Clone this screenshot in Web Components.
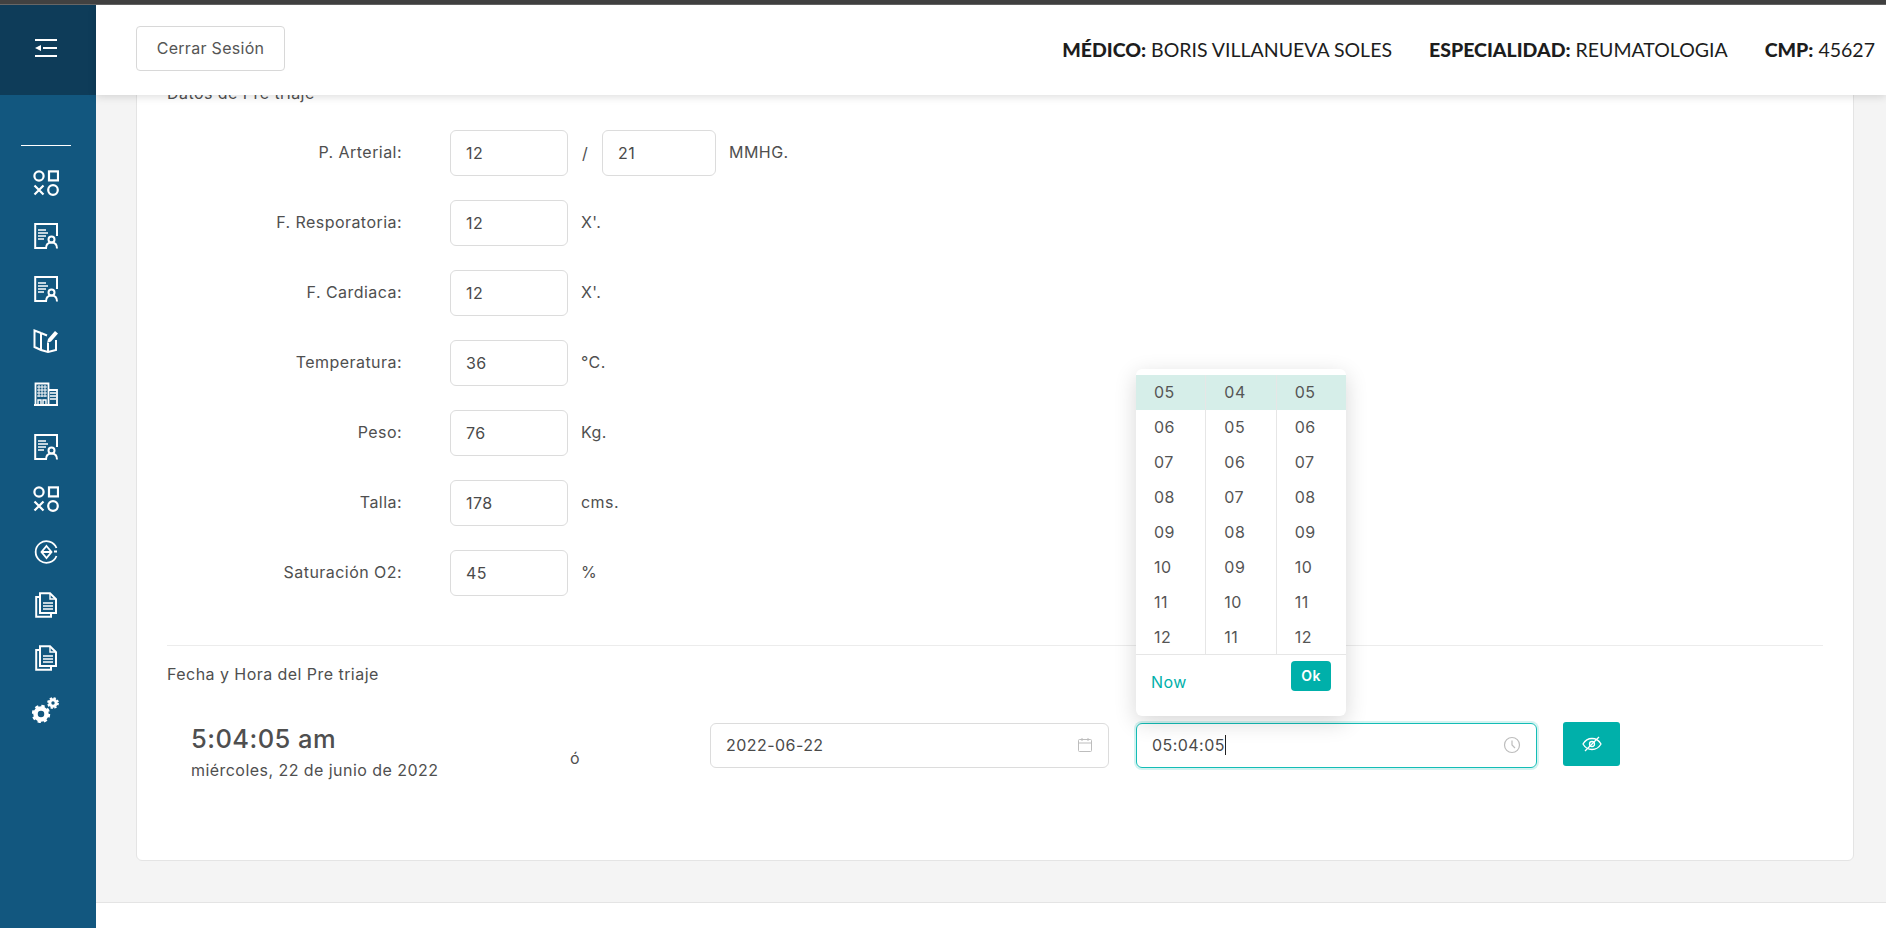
<!DOCTYPE html>
<html lang="es">
<head>
<meta charset="utf-8">
<title>Pre triaje</title>
<style>
  html, body { margin: 0; height: 100%; overflow: hidden; background: #f4f4f4; }
  body { font-family: "Inter", "Noto Sans", sans-serif; color: #4f4f4f; }
</style>
</head>
<body>
<app-shell>
  <side-nav slot="nav"></side-nav>
  <top-bar slot="top"></top-bar>
  <triage-card>
    <vital-row label="P. Arterial:" value="12" value2="21" unit="MMHG."></vital-row>
    <vital-row label="F. Resporatoria:" value="12" unit="X'."></vital-row>
    <vital-row label="F. Cardiaca:" value="12" unit="X'."></vital-row>
    <vital-row label="Temperatura:" value="36" unit="°C."></vital-row>
    <vital-row label="Peso:" value="76" unit="Kg."></vital-row>
    <vital-row label="Talla:" value="178" unit="cms."></vital-row>
    <vital-row label="Saturación O2:" value="45" unit="%"></vital-row>
    <date-time-row slot="footer"></date-time-row>
  </triage-card>
</app-shell>

<script>
// Icones de la barra lateral
const ICONS = {
  menu: `<svg width="24" height="20" viewBox="0 0 24 20" fill="none" stroke="#fff" stroke-width="2"><path d="M1 2h22M9 10h14M1 18h22"/><path d="M1 10l6-3v6z" fill="#fff" stroke="none"/></svg>`,
  apps: `<svg width="26" height="26" viewBox="0 0 26 26" fill="none" stroke="#fff" stroke-width="2.200"><circle cx="6" cy="6" r="4.600"/><rect x="16" y="1.400" width="9" height="9"/><path d="M1.500 15.500l9 9M10.500 15.500l-9 9"/><circle cx="20" cy="20" r="4.800"/></svg>`,
  doc: `<svg width="24" height="26" viewBox="0 0 24 26" fill="none" stroke="#fff" stroke-width="2"><path d="M13 25H1.200V1H23v12"/><path d="M4 7h8M4 10h10M4 13h8M4 16h6" stroke-width="1.500"/><circle cx="17.500" cy="16.500" r="3"/><path d="M12 25.500c0-4 2.500-6 5.500-6s5.500 2 5.500 6"/></svg>`,
  map: `<svg width="26" height="24" viewBox="0 0 26 24" fill="none" stroke="#fff" stroke-width="2"><path d="M8 4L1.500 1.500V18L8 21l7 2 8-2V11"/><path d="M8 4l6 2.500M8 4v17M15 14v9"/><path d="M14 14l1-4 7-8 3 2.500-7 8z" fill="#fff" stroke="none"/></svg>`,
  building: `<svg width="24" height="24" viewBox="0 0 24 24" fill="none" stroke="#fff"><path d="M1.500 23V1.500h13V23M14.500 8H23v15M0 23h24" stroke-width="1.800"/><path d="M3 5h10M3 8h10M3 11h10M3 14h10M5 3v12M8 3v12M11 3v12" stroke-width="1"/><path d="M16 11h6M16 14h6M16 17h6" stroke-width="1.500"/><path d="M4 23v-5h3v5M9 23v-5h3v5" stroke-width="1.400"/></svg>`,
  coin: `<svg width="24" height="24" viewBox="0 0 24 24" fill="none" stroke="#fff" stroke-width="1.800"><path d="M22.500 8A10.800 10.800 0 1 0 22.500 16"/><path d="M12.500 6l5 6-5 6-5-6z"/><path d="M7.500 12h10M20 11.500h3"/></svg>`,
  files: `<svg width="22" height="26" viewBox="0 0 22 26" fill="none" stroke="#fff" stroke-width="2"><path d="M5 5H1.200V24.800H16V21"/><path d="M5 1.200h10l6 6V21H5z"/><path d="M15 1.500v5.500h6" stroke-width="1.400"/><path d="M8 11h10M8 14h10M8 17h10" stroke-width="1.500"/></svg>`,
  gears: `<svg width="28" height="26" viewBox="0 0 28 26" fill="none" stroke="#fff"><circle cx="9" cy="17" r="5.500" stroke-width="4.500"/><circle cx="9" cy="17" r="8" stroke-width="2.400" stroke-dasharray="3.300 3"/><circle cx="21" cy="6" r="3.200" stroke-width="3"/><circle cx="21" cy="6" r="5" stroke-width="1.800" stroke-dasharray="2.300 1.630"/></svg>`
};

// Contenidor general de la pàgina
class AppShell extends HTMLElement {
  constructor() {
    super();
    this.attachShadow({ mode: 'open' });
    this.shadowRoot.innerHTML = `
      <style>
        :host { display: block; height: 100vh; }
        .strip { height: 5px; background: #414141; border-bottom: 1px solid #666; box-sizing: border-box; }
        .body { display: flex; height: calc(100vh - 5px); }
        .main { flex: 1; min-width: 0; display: flex; flex-direction: column; }
        .scroll { flex: 1; overflow: hidden; min-height: 0; display: flex; flex-direction: column; }
        .foot { height: 26px; background: #fff; border-top: 1px solid #e4e4e4; box-sizing: border-box; }
      </style>
      <div class="strip"></div>
      <div class="body">
        <slot name="nav"></slot>
        <div class="main">
          <slot name="top"></slot>
          <div class="scroll"><slot></slot></div>
          <div class="foot"></div>
        </div>
      </div>
    `;
  }
}

class SideNav extends HTMLElement {
  constructor() {
    super();
    this.attachShadow({ mode: 'open' });
    const names = ['apps', 'doc', 'doc', 'map', 'building', 'doc', 'apps', 'coin', 'files', 'files', 'gears'];
    const items = names.map(n => `<div class="item">${ICONS[n]}</div>`).join('');
    this.shadowRoot.innerHTML = `
      <style>
        :host { display: block; width: 96px; flex: none; background: #12577f; }
        .brand { height: 90px; background: #0e3c59; display: flex; align-items: center; justify-content: center; padding: 0 4px 4px 0; box-sizing: border-box; }
        .line { height: 1px; background: #fff; margin: 50px 25px 11px 21px; }
        .item { height: 52.700px; display: flex; align-items: center; justify-content: center; padding-right: 4px; }
      </style>
      <div class="brand">${ICONS.menu}</div>
      <div class="line"></div>
      ${items}
    `;
  }
}

class TopBar extends HTMLElement {
  constructor() {
    super();
    this.attachShadow({ mode: 'open' });
    this.shadowRoot.innerHTML = `
      <style>
        :host { display: flex; align-items: center; justify-content: space-between; height: 90px; flex: none; background: #fff;
          padding: 0 11px 0 40px; box-sizing: border-box; position: relative; z-index: 3; box-shadow: 0 2px 8px rgba(0,0,0,.13); }
        .out { height: 45px; width: 149px; box-sizing: border-box; border: 1px solid #d8d8d8; border-radius: 4px; background: #fff;
          font: 400 16px "Inter", sans-serif; color: #555; display: flex; align-items: center; justify-content: center; margin-top: -4px; letter-spacing: .3px; }
        .info { display: flex; gap: 37px; margin-top: -1px; font: 400 19.500px "Lato", sans-serif; color: #1d1d1d; }
        b { font-weight: 900; }
      </style>
      <div class="out">Cerrar Sesión</div>
      <div class="info">
        <span><b>MÉDICO:</b> BORIS VILLANUEVA SOLES</span>
        <span><b>ESPECIALIDAD:</b> REUMATOLOGIA</span>
        <span><b>CMP:</b> 45627</span>
      </div>
    `;
  }
}

class TriageCard extends HTMLElement {
  constructor() {
    super();
    this.attachShadow({ mode: 'open' });
    this.shadowRoot.innerHTML = `
      <style>
        :host { display: block; flex: none; height: 801px; margin: -35px 32px 0 40px; background: #fff; border: 1px solid #e4e4e4; border-radius: 6px;
          box-sizing: border-box; padding: 22px 30px 0; color: #4f4f4f; font-size: 16px; letter-spacing: .45px; }
        h4 { margin: 0; font: inherit; line-height: 20px; height: 47px; }
        .rows { display: flex; flex-direction: column; gap: 24px; margin-top: 0; }
        .sep { height: 1px; background: #ececec; margin-top: 49px; }
      </style>
      <h4>Datos de Pre triaje</h4>
      <div class="rows"><slot></slot></div>
      <div class="sep"></div>
      <slot name="footer"></slot>
    `;
  }
}

class VitalRow extends HTMLElement {
  constructor() {
    super();
    this.attachShadow({ mode: 'open' });
  }

  connectedCallback() {
    const value2 = this.getAttribute('value2');
    const second = value2 ? `<span class="slash">/</span><div class="box small">${value2}</div>` : '';
    this.shadowRoot.innerHTML = `
      <style>
        :host { display: flex; align-items: center; height: 46px; }
        .label { width: 235px; text-align: right; padding-bottom: 2px; }
        .box { width: 118px; height: 46px; box-sizing: border-box; border: 1px solid #dcdcdc; border-radius: 6px; margin-left: 48px;
          padding-left: 15px; display: flex; align-items: center; color: #4a4a4a; }
        .box.small { width: 114px; margin-left: 0; }
        .slash { width: 34px; text-align: center; }
        .unit { margin-left: 13px; padding-bottom: 2px; }
      </style>
      <span class="label">${this.getAttribute('label')}</span>
      <div class="box">${this.getAttribute('value')}</div>
      ${second}
      <span class="unit">${this.getAttribute('unit')}</span>
    `;
  }
}

// Llista desplegable del selector d'hora
class TimePanel extends HTMLElement {
  constructor() {
    super();
    this.attachShadow({ mode: 'open' });
    const col = first => Array.from({ length: 8 }, (_, i) =>
      `<div class="cell${i === 0 ? ' on' : ''}">${String(first + i).padStart(2, '0')}</div>`).join('');
    this.shadowRoot.innerHTML = `
      <style>
        :host { display: block; position: absolute; left: -1px; bottom: calc(100% + 8px); width: 210px; height: 347px; background: #fff; border-radius: 6px;
          box-shadow: 0 6px 22px rgba(0,0,0,.16); z-index: 4; padding-top: 6px; box-sizing: border-box; letter-spacing: .5px; }
        .cols { display: flex; height: 279px; border-bottom: 1px solid #e6e6e6; overflow: hidden; }
        .col { flex: 1; border-left: 1px solid #e6e6e6; }
        .col:first-child { border-left: 0; }
        .cell { height: 35px; display: flex; align-items: center; padding-left: 18px; color: #555; box-sizing: border-box; }
        .cell.on { background: #d6eee9; }
        .bar { display: flex; justify-content: space-between; align-items: flex-start; padding: 6px 15px 0; }
        .now { color: #00b0aa; margin-top: 11px; }
        .ok { width: 40px; height: 30px; background: #00b0aa; color: #fff; border-radius: 4px; display: flex; align-items: center; justify-content: center; font-weight: 600; font-size: 14px; }
      </style>
      <div class="cols">
        <div class="col">${col(5)}</div>
        <div class="col">${col(4)}</div>
        <div class="col">${col(5)}</div>
      </div>
      <div class="bar"><span class="now">Now</span><span class="ok">Ok</span></div>
    `;
  }
}

class DateTimeRow extends HTMLElement {
  constructor() {
    super();
    this.attachShadow({ mode: 'open' });
    this.shadowRoot.innerHTML = `
      <style>
        :host { display: block; }
        .title { margin-top: 18px; line-height: 20px; }
        .row { display: flex; align-items: center; height: 64px; margin-top: 29px; }
        .clock { width: 403px; padding-left: 24px; box-sizing: border-box; padding-top: 9px; align-self: flex-start; }
        .time { font-size: 25.500px; line-height: 34px; font-weight: 500; }
        .date { font-size: 16px; line-height: 28px; }
        .or { width: 140px; padding-top: 26px; }
        .field { height: 45px; box-sizing: border-box; border: 1px solid #dcdcdc; border-radius: 6px; display: flex; align-items: center; justify-content: space-between; padding: 0 15px; color: #4a4a4a; position: relative; }
        .d { width: 399px; margin-right: 27px; }
        .t { width: 401px; margin-right: 26px; border-color: #14bdb6; box-shadow: 0 0 0 2px #d3f3f1; }
        .caret { border-right: 1px solid #222; }
        .eye { width: 57px; height: 44px; margin-top: -2px; background: #00b0aa; border-radius: 3px; display: flex; align-items: center; justify-content: center; }
      </style>
      <div class="title">Fecha y Hora del Pre triaje</div>
      <div class="row">
        <div class="clock">
          <div class="time">5:04:05 am</div>
          <div class="date">miércoles, 22 de junio de 2022</div>
        </div>
        <div class="or">ó</div>
        <div class="field d">2022-06-22
          <svg width="16" height="16" viewBox="0 0 16 16" fill="none" stroke="#bdbdbd"><rect x="1.500" y="2.500" width="13" height="12" rx="1"/><path d="M1.500 6h13M5 1v3M11 1v3"/></svg>
        </div>
        <div class="field t"><span class="caret">05:04:05</span>
          <svg width="18" height="18" viewBox="0 0 18 18" fill="none" stroke="#bdbdbd" stroke-width="1.200"><circle cx="9" cy="9" r="7.500"/><path d="M9 4.500V9l3 3"/></svg>
          <time-panel></time-panel>
        </div>
        <div class="eye">
          <svg width="20" height="20" viewBox="0 0 20 20" fill="none" stroke="#fff" stroke-width="1.300"><path d="M1 10c2-3.500 5-5.500 9-5.500s7 2 9 5.500c-2 3.500-5 5.500-9 5.500s-7-2-9-5.500z"/><circle cx="10" cy="10" r="2.500"/><path d="M17 3L3 17"/></svg>
        </div>
      </div>
    `;
  }
}

customElements.define('app-shell', AppShell);
customElements.define('side-nav', SideNav);
customElements.define('top-bar', TopBar);
customElements.define('triage-card', TriageCard);
customElements.define('vital-row', VitalRow);
customElements.define('time-panel', TimePanel);
customElements.define('date-time-row', DateTimeRow);
</script>
</body>
</html>
